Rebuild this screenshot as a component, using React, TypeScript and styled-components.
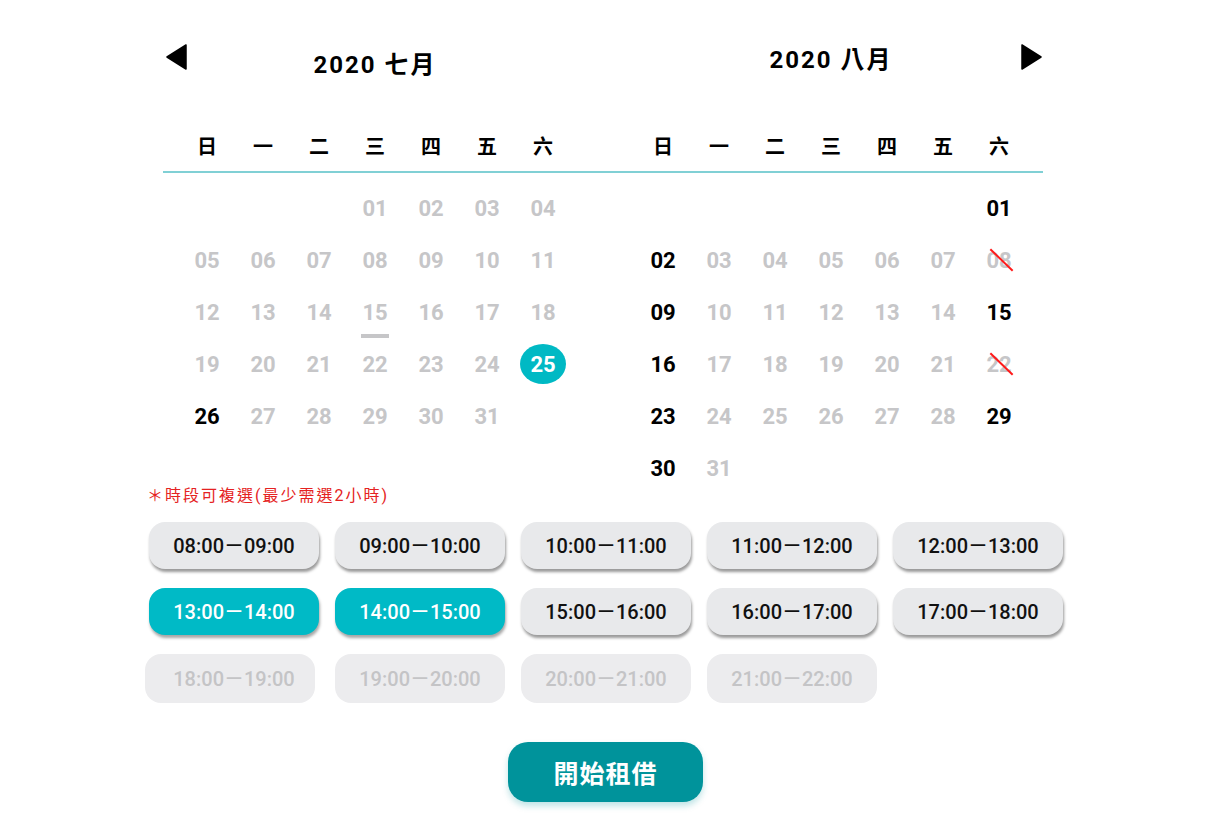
import React, { useState } from 'react';
import styled, { createGlobalStyle, css } from 'styled-components';

const GlobalStyle = createGlobalStyle`
  body {
    margin: 0;
    background: #fff;
    font-family: Roboto, "Noto Sans CJK TC", sans-serif;
    color: #000;
  }
`;

const Page = styled.div`
  width: 1213px;
  height: 838px;
  padding-top: 44px;
  box-sizing: border-box;
`;

const Calendars = styled.div`
  width: 880px;
  margin-left: 163px;
`;

const MonthRow = styled.div`
  display: grid;
  grid-template-columns: 392px 392px;
  column-gap: 64px;
  padding: 0 16px;
`;

const TitleBar = styled.div`
  display: grid;
  grid-template-columns: 1fr auto 1fr;
  align-items: start;
  height: 85px;
`;

const Arrow = styled.button<{ $side: 'left' | 'right' }>`
  border: 0;
  padding: 0;
  background: none;
  width: 22px;
  height: 26px;
  cursor: pointer;
  ${(p) =>
    p.$side === 'left'
      ? css`
          grid-column: 1;
          justify-self: start;
          margin-left: -13px;
        `
      : css`
          grid-column: 3;
          justify-self: end;
          margin-right: -15px;
        `}
  svg {
    display: block;
  }
`;

const Title = styled.h2<{ $drop: number }>`
  grid-column: 2;
  margin: ${(p) => p.$drop}px 0 0;
  font-family: Roboto, "Noto Sans CJK TC", sans-serif;
  font-size: 24px;
  font-weight: 700;
  letter-spacing: 2px;
  line-height: 30px;
  white-space: nowrap;
`;

const WeekHeader = styled(MonthRow)`
  border-bottom: 2.5px solid #80d0d5;
  padding-bottom: 8px;
`;

const Grid = styled.div`
  display: grid;
  grid-template-columns: repeat(7, 56px);
`;

const WeekDay = styled.div`
  height: 34px;
  line-height: 34px;
  text-align: center;
  font-family: "Noto Sans CJK TC", sans-serif;
  font-size: 20px;
  font-weight: 700;
`;

const DateArea = styled(MonthRow)`
  padding-top: 9px;
`;

const DayGrid = styled(Grid)`
  grid-auto-rows: 52px;
`;

type DayKind = 'off' | 'on' | 'picked' | 'today' | 'blocked' | 'empty';

const Day = styled.div<{ $kind: DayKind }>`
  position: relative;
  display: flex;
  align-items: center;
  justify-content: center;
  font-family: Roboto, sans-serif;
  font-size: 22px;
  font-weight: 700;
  color: ${(p) => (p.$kind === 'on' ? '#000' : '#c6c6c8')};
  span {
    position: relative;
    display: flex;
    align-items: center;
    justify-content: center;
    width: 46px;
    height: 40px;
    border-radius: 50%;
  }
  ${(p) =>
    p.$kind === 'picked' &&
    css`
      color: #fff;
      span {
        background: #00b9c4;
      }
    `}
  ${(p) =>
    p.$kind === 'today' &&
    css`
      span::after {
        content: '';
        position: absolute;
        left: 9px;
        right: 9px;
        bottom: -6px;
        height: 4px;
        background: #c6c6c8;
      }
    `}
  ${(p) =>
    p.$kind === 'blocked' &&
    css`
      span::after {
        content: '';
        position: absolute;
        left: 10px;
        top: 19px;
        width: 31px;
        height: 2px;
        background: #ff1a1a;
        transform: rotate(44deg);
      }
    `}
`;

const Slots = styled.section`
  margin-left: 145px;
  margin-top: -8px;
`;

const Note = styled.p`
  margin: 0 0 16px 2px;
  font-family: Roboto, "Noto Sans CJK TC", sans-serif;
  font-size: 16px;
  letter-spacing: 2px;
  line-height: 20px;
  color: #e52222;
`;

const SlotGrid = styled.div`
  display: grid;
  grid-template-columns: repeat(5, 170px);
  column-gap: 16px;
  row-gap: 19px;
  padding-left: 4px;
`;

type SlotState = 'idle' | 'chosen' | 'disabled';

const Slot = styled.button<{ $state: SlotState }>`
  width: 170px;
  height: 47px;
  border: 0;
  border-radius: 16px;
  padding: 0 0 2px;
  font-family: Roboto, "Noto Sans CJK TC", sans-serif;
  font-size: 20px;
  font-weight: 500;
  cursor: pointer;
  white-space: nowrap;
  ${(p) =>
    p.$state === 'idle' &&
    css`
      background: #e8e9eb;
      color: #111;
      box-shadow: 1px 3px 3px rgba(0, 0, 0, 0.4);
    `}
  ${(p) =>
    p.$state === 'chosen' &&
    css`
      background: #00bac6;
      color: #fff;
      box-shadow: 1px 3px 3px rgba(0, 0, 0, 0.35);
    `}
  ${(p) =>
    p.$state === 'disabled' &&
    css`
      background: #ececee;
      color: #c4c4c6;
      height: 49px;
      cursor: default;
    `}
`;

const FirstDisabled = styled(Slot)`
  margin-left: -4px;
  padding-left: 8px;
`;

const Footer = styled.div`
  display: flex;
  justify-content: center;
  margin-top: 39px;
  padding-right: 2px;
`;

const StartButton = styled.button`
  width: 195px;
  height: 60px;
  border: 0;
  border-radius: 20px;
  background: #00939b;
  color: #fff;
  font-family: "Noto Sans CJK TC", sans-serif;
  font-size: 25px;
  font-weight: 700;
  letter-spacing: 1px;
  box-shadow: 0 4px 6px rgba(0, 147, 155, 0.25);
  cursor: pointer;
`;

const weekDays = ['日', '一', '二', '三', '四', '五', '六'];

type Cell = { n: number; kind: DayKind } | null;

function buildMonth(
  offset: number,
  days: number,
  kindOf: (n: number) => DayKind
): Cell[] {
  const cells: Cell[] = [];
  for (let i = 0; i < offset; i++) cells.push(null);
  for (let n = 1; n <= days; n++) cells.push({ n, kind: kindOf(n) });
  return cells;
}

const july = buildMonth(3, 31, (n) => {
  if (n === 25) return 'picked';
  if (n === 26) return 'on';
  if (n === 15) return 'today';
  return 'off';
});

const august = buildMonth(6, 31, (n) => {
  if (n === 8 || n === 22) return 'blocked';
  if ([1, 2, 9, 15, 16, 23, 29, 30].includes(n)) return 'on';
  return 'off';
});

const pad = (n: number) => String(n).padStart(2, '0');

const slotHours = [8, 9, 10, 11, 12, 13, 14, 15, 16, 17, 18, 19, 20, 21];

function MonthDays({ cells }: { cells: Cell[] }) {
  return (
    <DayGrid>
      {cells.map((c, i) =>
        c ? (
          <Day key={i} $kind={c.kind}>
            <span>{pad(c.n)}</span>
          </Day>
        ) : (
          <Day key={i} $kind="empty" />
        )
      )}
    </DayGrid>
  );
}

export default function App() {
  const [chosen, setChosen] = useState<number[]>([13, 14]);

  const toggle = (h: number) => {
    setChosen((prev) =>
      prev.includes(h) ? prev.filter((x) => x !== h) : [...prev, h]
    );
  };

  return (
    <>
      <GlobalStyle />
      <Page>
        <Calendars>
          <MonthRow>
            <TitleBar>
              <Arrow $side="left" aria-label="prev">
                <svg width="22" height="26" viewBox="0 0 22 26">
                  <path d="M20 1 L20 25 L1 13 Z" fill="#000" strokeLinejoin="round" stroke="#000" strokeWidth="1.5" />
                </svg>
              </Arrow>
              <Title $drop={6}>2020 七月</Title>
            </TitleBar>
            <TitleBar>
              <Title $drop={1}>2020 八月</Title>
              <Arrow $side="right" aria-label="next">
                <svg width="22" height="26" viewBox="0 0 22 26">
                  <path d="M2 1 L2 25 L21 13 Z" fill="#000" strokeLinejoin="round" stroke="#000" strokeWidth="1.5" />
                </svg>
              </Arrow>
            </TitleBar>
          </MonthRow>
          <WeekHeader>
            <Grid>
              {weekDays.map((d) => (
                <WeekDay key={d}>{d}</WeekDay>
              ))}
            </Grid>
            <Grid>
              {weekDays.map((d) => (
                <WeekDay key={d}>{d}</WeekDay>
              ))}
            </Grid>
          </WeekHeader>
          <DateArea>
            <MonthDays cells={july} />
            <MonthDays cells={august} />
          </DateArea>
        </Calendars>
        <Slots>
          <Note>＊時段可複選(最少需選2小時)</Note>
          <SlotGrid>
            {slotHours.map((h) => {
              const label = `${pad(h)}:00－${pad(h + 1)}:00`;
              if (h >= 18) {
                const Btn = h === 18 ? FirstDisabled : Slot;
                return (
                  <Btn key={h} $state="disabled" disabled>
                    {label}
                  </Btn>
                );
              }
              return (
                <Slot
                  key={h}
                  $state={chosen.includes(h) ? 'chosen' : 'idle'}
                  onClick={() => toggle(h)}
                >
                  {label}
                </Slot>
              );
            })}
          </SlotGrid>
        </Slots>
        <Footer>
          <StartButton>開始租借</StartButton>
        </Footer>
      </Page>
    </>
  );
}
